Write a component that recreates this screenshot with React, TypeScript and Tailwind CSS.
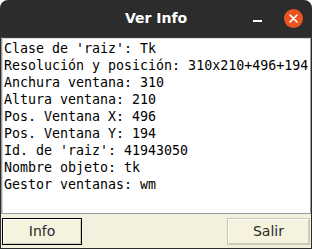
export default function App() {
  const lines = [
    "Clase de 'raiz': Tk",
    "Resolución y posición: 310x210+496+194",
    "Anchura ventana: 310",
    "Altura ventana: 210",
    "Pos. Ventana X: 496",
    "Pos. Ventana Y: 194",
    "Id. de 'raiz': 41943050",
    "Nombre objeto: tk",
    "Gestor ventanas: wm",
  ];

  return (
    <div className="w-[312px] h-[249px] flex flex-col bg-white overflow-hidden">
      <div className="h-[37px] shrink-0 flex items-center relative bg-[#2c2c2c] rounded-t-[8px]">
        <span className="flex-1 text-center text-white font-bold text-[14px] font-['DejaVu_Sans',sans-serif]">
          Ver Info
        </span>
        <span className="absolute left-[253px] top-[20px] w-[9px] h-[1.5px] bg-white" />
        <span className="absolute left-[284px] top-[9px] w-[19px] h-[19px] rounded-full bg-[#e95420] flex items-center justify-center">
          <svg width="9" height="9" viewBox="0 0 9 9">
            <path d="M1 1L8 8M8 1L1 8" stroke="white" strokeWidth="1.6" strokeLinecap="round" />
          </svg>
        </span>
      </div>
      <div className="flex-1 flex flex-col bg-[#f2f1de] border-x border-b border-[#2c2c2c]">
        <div className="h-[177px] border border-[#9a9a9a] border-t-[#3a3a3a] bg-white px-[2px] pt-[2px] shadow-[inset_1px_1px_0_#d8d8d8] font-['DejaVu_Sans_Mono',monospace] text-[13.3px] leading-[17px] text-black whitespace-pre">
          {lines.map((l) => (
            <div key={l}>{l}</div>
          ))}
        </div>
        <div className="flex-1 flex items-center justify-between px-[1px] font-['DejaVu_Sans',sans-serif] text-[14px] text-[#2a2a2a]">
          <button className="w-[80px] h-[27px] border border-black bg-[#f5f3dd] shadow-[inset_1px_1px_0_#ffffff,inset_-1px_-1px_0_#cfcdb8]">
            Info
          </button>
          <button className="w-[83px] h-[27px] border border-[#c9c8b5] bg-[#f5f3dd] shadow-[inset_1px_1px_0_#ffffff,inset_-1px_-1px_0_#cfcdb8]">
            Salir
          </button>
        </div>
      </div>
    </div>
  );
}
